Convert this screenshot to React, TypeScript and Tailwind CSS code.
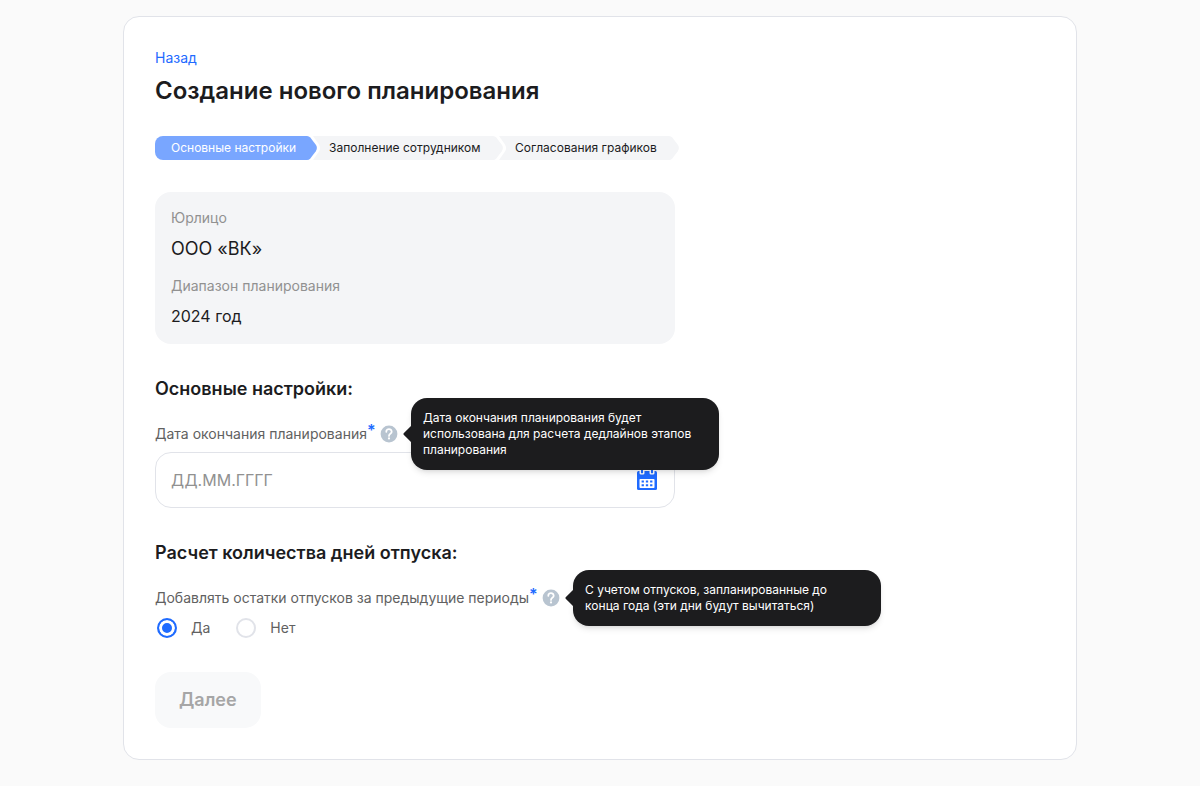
import { useState } from "react";
import type { ReactNode } from "react";

type StepProps = { children: ReactNode; width: string; active?: boolean; first?: boolean; last?: boolean };

function Step({ children, width, active, first, last }: StepProps) {
  return (
    <li aria-current={active ? "step" : undefined} className="flex h-6 items-center">
      <span
        className={`flex h-6 items-center text-xs leading-4 whitespace-nowrap ${width} ${
          first ? "rounded-l-lg pl-4" : "pl-2"
        } ${active ? "bg-[#79a6ff] text-white" : "bg-[#f4f5f7] text-[#1c1c1e]"}`}
      >
        {children}
      </span>
      <svg width="16" height="24" viewBox="0 0 16 24" aria-hidden="true" className="shrink-0">
        {!last && <path d="M0 0H16V24H0Z" fill="#f4f5f7" />}
        <path d="M0 0H8L13.8 8.2Q16.4 12 13.8 15.8L8 24H0Z" fill="#ffffff" />
        <path
          d="M0 0H2Q4 0 5.3 1.6L10.8 8.8Q13 12 10.8 15.2L5.3 22.4Q4 24 2 24H0Z"
          fill={active ? "#79a6ff" : "#f4f5f7"}
        />
      </svg>
    </li>
  );
}

function Help({ id, lines }: { id: string; lines: string[] }) {
  return (
    <span className="relative ml-1 flex">
      <button type="button" aria-label="Подсказка" aria-describedby={id} className="size-5">
        <svg width="20" height="20" viewBox="0 0 20 20" fill="none" aria-hidden="true">
          <circle cx="10" cy="10" r="8.4" fill="#b8c4d0" />
          <path
            d="M7.3 7.8A2.7 2.5 0 1 1 11.6 9.6C10.5 10.4 10 10.8 10 11.9"
            stroke="#fff"
            strokeWidth="1.8"
            strokeLinecap="round"
          />
          <circle cx="10" cy="14.4" r="1.1" fill="#fff" />
        </svg>
      </button>
      <span
        id={id}
        role="tooltip"
        className="absolute top-1/2 left-full z-10 ml-3 w-[308px] -translate-y-1/2 rounded-2xl bg-[#1c1c1e] p-3 text-xs leading-4 text-white shadow-md"
      >
        <svg
          width="9"
          height="16"
          viewBox="0 0 9 16"
          aria-hidden="true"
          className="absolute top-1/2 -left-2 -translate-y-1/2"
        >
          <path d="M9 0L8 0L.7 7.3Q0 8 .7 8.7L8 16H9Z" fill="#1c1c1e" />
        </svg>
        {lines.map((line) => (
          <span key={line} className="block">
            {line}
          </span>
        ))}
      </span>
    </span>
  );
}

function Required() {
  return <span className="-mt-1 w-2 text-base leading-5 font-semibold text-[#1f6bff]">*</span>;
}

function CalendarIcon() {
  return (
    <svg width="20" height="22" viewBox="0 0 20 22" aria-hidden="true">
      <rect y="3" width="20" height="19" rx="1.5" fill="#1f6bff" />
      <path d="M2.5 2H7.5V5Q7.5 6.5 6 6.5H4Q2.5 6.5 2.5 5ZM12.5 2H17.5V5Q17.5 6.5 16 6.5H14Q12.5 6.5 12.5 5Z" fill="#fff" />
      <rect x="4" y="0" width="2" height="5.2" rx=".5" fill="#1f6bff" />
      <rect x="14" y="0" width="2" height="5.2" rx=".5" fill="#1f6bff" />
      <rect x="2.5" y="11" width="15" height="9" rx=".8" fill="#fff" />
      <path
        fill="#1f6bff"
        d="M4.6 12.5H6.9V14.6H4.6ZM8.85 12.5H11.15V14.6H8.85ZM13.1 12.5H15.4V14.6H13.1ZM4.6 16.2H6.9V18.3H4.6ZM8.85 16.2H11.15V18.3H8.85ZM13.1 16.2H15.4V18.3H13.1Z"
      />
    </svg>
  );
}

export default function App() {
  const [carryOver, setCarryOver] = useState("yes");
  const [date, setDate] = useState("");
  const radio =
    "m-0.5 size-5 appearance-none rounded-full border-2 border-[#e1e3e9] bg-white checked:border-[#1f6bff] checked:bg-[#1f6bff] checked:shadow-[inset_0_0_0_3px_#fff]";

  return (
    <div className="min-h-screen bg-[#fafafa] px-4 pt-4 pb-6 font-['Inter','Liberation_Sans',sans-serif] text-sm leading-5 text-[#1c1c1e]">
      <main className="mx-auto max-w-[954px] rounded-2xl border border-[#e1e3e9] bg-white p-[31px]">
        <a href="#" className="block w-fit text-[#1f6bff]">
          Назад
        </a>
        <h1 className="mt-2 text-2xl leading-[30px] font-semibold">Создание нового планирования</h1>

        <ol className="mt-[30px] flex">
          <Step active first width="min-w-[150px]">
            Основные настройки
          </Step>
          <Step width="min-w-[170px]">Заполнение сотрудником</Step>
          <Step last width="min-w-[160px]">
            Согласования графиков
          </Step>
        </ol>

        <form onSubmit={(e) => e.preventDefault()}>
          <dl className="mt-8 max-w-[520px] rounded-2xl bg-[#f4f5f7] p-4">
            <dt className="text-[#919191]">Юрлицо</dt>
            <dd className="mt-2 text-lg leading-[26px]">ООО «ВК»</dd>
            <dt className="mt-[14px] text-[#919191]">Диапазон планирования</dt>
            <dd className="mt-2 text-base leading-6">2024 год</dd>
          </dl>

          <h2 className="mt-8 text-lg leading-[26px] font-semibold">Основные настройки:</h2>
          <div className="mt-[22px] flex h-5 items-center text-[#616161]">
            <label htmlFor="end-date" className="flex">
              Дата окончания планирования
              <Required />
            </label>
            <Help
              id="end-date-help"
              lines={[
                "Дата окончания планирования будет",
                "использована для расчета дедлайнов этапов",
                "планирования",
              ]}
            />
          </div>
          <div className="mt-2 flex h-14 max-w-[520px] items-center rounded-2xl border border-[#e1e3e9] bg-white pr-[17px] pl-[15px]">
            <input
              id="end-date"
              type="text"
              placeholder="ДД.ММ.ГГГГ"
              value={date}
              onChange={(e) => setDate(e.target.value)}
              className="min-w-0 flex-1 text-base leading-6 outline-none placeholder:text-[#919191]"
            />
            <button type="button" aria-label="Открыть календарь" className="pb-0.5">
              <CalendarIcon />
            </button>
          </div>

          <h2 className="mt-8 text-lg leading-[26px] font-semibold">Расчет количества дней отпуска:</h2>
          <div className="mt-[22px] flex h-5 items-center text-[#616161]">
            <span id="carry-label" className="flex">
              Добавлять остатки отпусков за предыдущие периоды
              <Required />
            </span>
            <Help
              id="carry-help"
              lines={["С учетом отпусков, запланированные до", "конца года (эти дни будут вычитаться)"]}
            />
          </div>
          <div role="radiogroup" aria-labelledby="carry-label" className="mt-2 flex gap-6 text-[#616161]">
            <label className="flex items-center gap-3">
              <input
                type="radio"
                name="carry"
                checked={carryOver === "yes"}
                onChange={() => setCarryOver("yes")}
                className={radio}
              />
              Да
            </label>
            <label className="flex items-center gap-3">
              <input
                type="radio"
                name="carry"
                checked={carryOver === "no"}
                onChange={() => setCarryOver("no")}
                className={radio}
              />
              Нет
            </label>
          </div>

          <button
            type="submit"
            disabled
            className="mt-8 block h-14 rounded-2xl bg-[#f8f9fa] px-6 text-lg leading-[26px] font-semibold text-[#a6a6a6]"
          >
            Далее
          </button>
        </form>
      </main>
    </div>
  );
}
